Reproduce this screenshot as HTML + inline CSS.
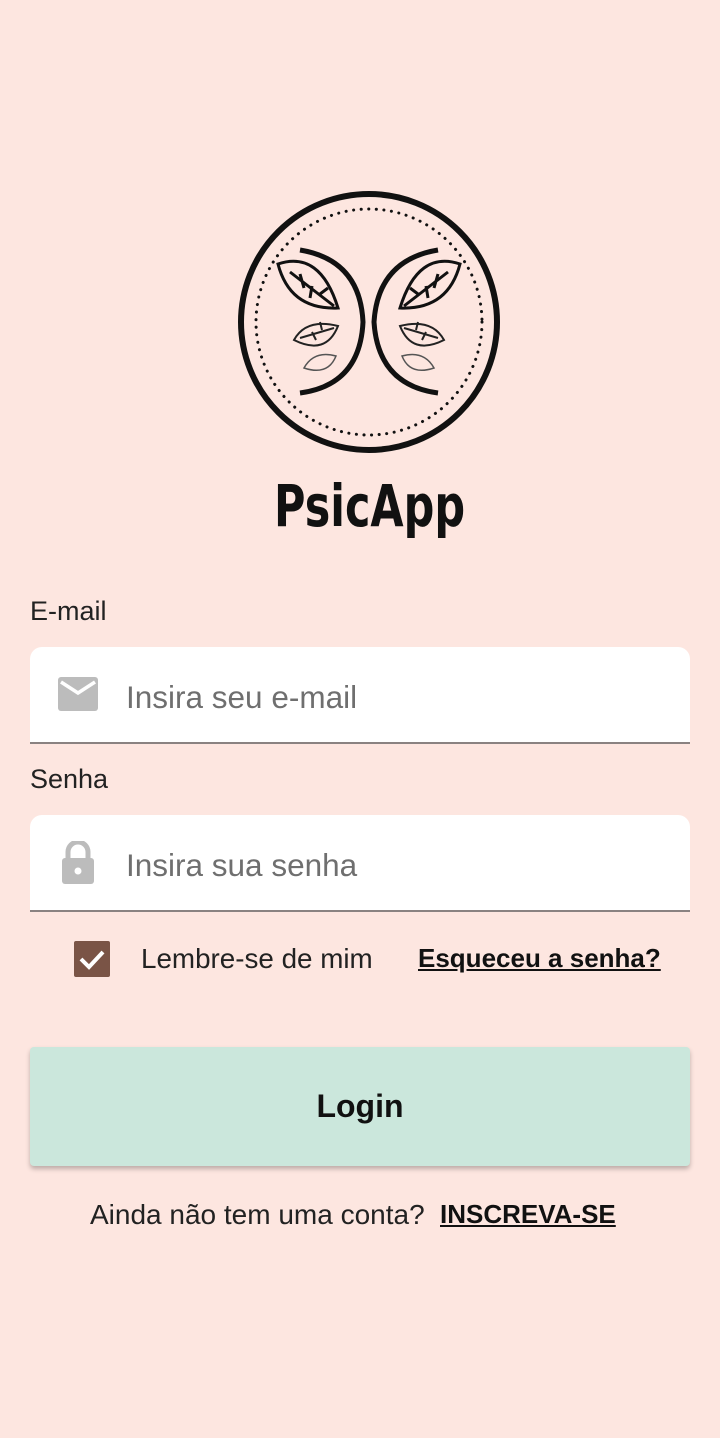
<!DOCTYPE html>
<html><head><meta charset="utf-8"><style>
body{margin:0;width:720px;height:1438px;background:#fde6e0;font-family:"Liberation Sans",Roboto,sans-serif;position:relative;overflow:hidden;color:#222}
.abs{position:absolute}
.lbl{left:30px;font-size:27px;color:#222}
.box{left:30px;width:660px;height:95px;background:#fff;border-radius:12px 12px 0 0;border-bottom:2px solid #8a8281}
.ph{position:absolute;left:96px;top:0;line-height:100px;font-size:31.5px;color:#6f6f6f}
</style></head><body>
<svg class="abs" style="left:230px;top:180px" width="280" height="290" viewBox="0 0 280 290">
<circle cx="139" cy="142" r="128" fill="none" stroke="#111" stroke-width="6"/>
<circle cx="139" cy="142" r="113" fill="none" stroke="#111" stroke-width="3" stroke-dasharray="0.1 7.5" stroke-linecap="round"/>
<path d="M70 70 Q130 80 133 142 Q130 205 70 213" fill="none" stroke="#111" stroke-width="5"/>
<path d="M208 70 Q148 80 144 142 Q148 205 208 213" fill="none" stroke="#111" stroke-width="5"/>
<g fill="none" stroke="#111" stroke-width="3">
<path d="M48 84 Q90 70 108 128 Q60 130 48 84Z"/>
<path d="M60 92 L104 126 M70 94 L74 108 M82 106 L80 118 M90 114 L98 108"/>
<path d="M230 84 Q188 70 170 128 Q218 130 230 84Z"/>
<path d="M218 92 L174 126 M208 94 L204 108 M196 106 L198 118 M188 114 L180 108"/>
</g>
<g fill="none" stroke="#222" stroke-width="2">
<path d="M64 160 Q76 138 108 146 Q96 176 64 160Z"/><path d="M70 158 L104 148 M82 152 L86 160 M92 150 L90 142"/>
<path d="M214 160 Q202 138 170 146 Q182 176 214 160Z"/><path d="M208 158 L174 148 M196 152 L192 160 M186 150 L188 142"/>
</g>
<g fill="none" stroke="#555" stroke-width="1.5">
<path d="M74 188 Q84 170 106 176 Q98 196 74 188Z"/>
<path d="M204 188 Q194 170 172 176 Q180 196 204 188Z"/>
</g>
</svg>
<div class="abs" style="left:274px;top:472px;font-size:58px;font-weight:bold;color:#111;font-family:'DejaVu Sans',sans-serif;transform:scaleX(0.74);transform-origin:left">PsicApp</div>

<div class="abs lbl" style="top:596px">E-mail</div>
<div class="abs box" style="top:647px">
<svg class="abs" style="left:28px;top:30px" width="40" height="34" viewBox="0 0 40 34"><rect x="0" y="0" width="40" height="34" rx="3" fill="#bcbcbc"/><path d="M3 5 L20 16 L37 5" fill="none" stroke="#fff" stroke-width="3.5"/></svg>
<div class="ph">Insira seu e-mail</div></div>

<div class="abs lbl" style="top:764px">Senha</div>
<div class="abs box" style="top:815px">
<svg class="abs" style="left:30px;top:26px" width="36" height="44" viewBox="0 0 36 44"><path d="M8 18 V11 A10 10 0 0 1 28 11 V18" fill="none" stroke="#bcbcbc" stroke-width="5"/><rect x="2" y="17" width="32" height="26" rx="3" fill="#bcbcbc"/><circle cx="18" cy="30" r="3.5" fill="#fff"/></svg>
<div class="ph">Insira sua senha</div></div>

<div class="abs" style="left:74px;top:941px;width:36px;height:36px;background:#7a5446;border-radius:2px">
<svg width="36" height="36" viewBox="0 0 36 36"><path d="M7 18 L15 26 L29 11" fill="none" stroke="#fff" stroke-width="4"/></svg></div>
<div class="abs" style="left:141px;top:943px;font-size:27.8px;color:#222">Lembre-se de mim</div>
<div class="abs" style="left:418px;top:943px;font-size:26px;font-weight:bold;color:#111;text-decoration:underline">Esqueceu a senha?</div>

<div class="abs" style="left:30px;top:1047px;width:660px;height:119px;background:#cbe7dc;border-radius:4px;box-shadow:0 3px 5px rgba(0,0,0,0.25);text-align:center;line-height:119px;font-size:32px;font-weight:bold;color:#111">Login</div>

<div class="abs" style="left:90px;top:1199px;font-size:28px;color:#222">Ainda não tem uma conta?</div>
<div class="abs" style="left:440px;top:1199px;font-size:26px;font-weight:bold;color:#111;text-decoration:underline">INSCREVA-SE</div>
</body></html>
